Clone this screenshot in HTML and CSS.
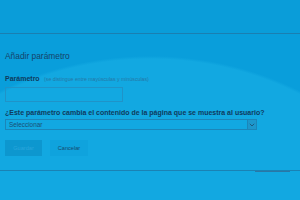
FILE: index.html
```html
<!DOCTYPE html>
<html lang="es">
  <head>
    <meta charset="UTF-8" />
    <meta name="viewport" content="width=device-width, initial-scale=1.0" />
    <title>Añadir parámetro</title>
    <link rel="stylesheet" href="styles.css">
  </head>
  <body>
    <div class="page">
      <header class="topbar"></header>
      <main class="dialog">
        <h2 class="title">Añadir parámetro</h2>
        <label class="field-label">
          <b>Parámetro</b>
          <span class="hint">(se distingue entre mayúsculas y minúsculas)</span>
        </label>
        <div class="text-input"></div>
        <p class="question">¿Este parámetro cambia el contenido de la página que se muestra al usuario?</p>
        <div class="select">
          <span class="select-value">Seleccionar</span>
          <span class="select-arrow">
            <svg width="6" height="4" viewBox="0 0 6 4">
              <path d="M0.8 0.8 L3 3 L5.2 0.8" fill="none" stroke="#1d5a80" stroke-width="1" />
            </svg>
          </span>
        </div>
        <div class="actions">
          <button class="btn btn-save" disabled>Guardar</button>
          <button class="btn btn-cancel">Cancelar</button>
        </div>
      </main>
      <footer class="bottom">
        <span class="bottom-mark"></span>
      </footer>
    </div>
  </body>
</html>
```

FILE: styles.css
```css
@charset 'utf-8';
* {
  margin: 0;
  padding: 0;
  box-sizing: border-box;
}

html,
body {
  width: 300px;
  height: 200px;
  overflow: hidden;
}

body {
  font-family: "Liberation Sans", Arial, sans-serif;
  color: #15486b;
  background: #099edb;
}

.page {
  height: 200px;
  background: radial-gradient(294px 250px at 150px 306px, #12a8e1 98.8%, #099edb 100%);
}

.topbar {
  height: 34px;
  background: #0a9dd9;
  border-bottom: 1px solid #1a7fb1;
}

.dialog {
  padding: 0 5px;
}

.title {
  margin-top: 17px;
  font-size: 8.4px;
  line-height: 10px;
  font-weight: normal;
  color: #15436a;
}

.field-label {
  display: block;
  margin-top: 10px;
  line-height: 9px;
  white-space: nowrap;
}
.field-label b {
  font-size: 7px;
  color: #0f3b5e;
}
.hint {
  font-size: 5.2px;
  color: #2577a6;
}

.text-input {
  margin-top: 3px;
  width: 118px;
  height: 15px;
  border: 1px solid #1f93c8;
}

.question {
  margin-top: 6px;
  font-size: 7px;
  font-weight: bold;
  line-height: 9px;
  color: #0f3b5e;
  white-space: nowrap;
}

.select {
  margin-top: 2px;
  width: 252px;
  height: 11px;
  border: 1px solid #1b86b9;
  display: flex;
  align-items: center;
  justify-content: space-between;
}
.select-value {
  padding-left: 3px;
  font-size: 6.4px;
  color: #1a4f74;
}
.select-arrow {
  width: 9px;
  height: 9px;
  border-left: 1px solid #1b86b9;
  background: #1d97cc;
  display: flex;
  align-items: center;
  justify-content: center;
}

.actions {
  margin-top: 10px;
  display: flex;
  gap: 8px;
}
.btn {
  height: 16px;
  border: none;
  font-family: inherit;
  font-size: 5.6px;
}
.btn-save {
  width: 37px;
  background: #0d97cf;
  color: #2aa6dc;
}
.btn-cancel {
  width: 38px;
  background: #0fa3dd;
  color: #174a6e;
}

.bottom {
  margin-top: 14px;
  height: 2px;
  border-top: 1px solid #1a82b4;
  display: flex;
  justify-content: flex-end;
  padding-right: 10px;
}
.bottom-mark {
  width: 35px;
  height: 1px;
  background: #2a77a6;
}
```
